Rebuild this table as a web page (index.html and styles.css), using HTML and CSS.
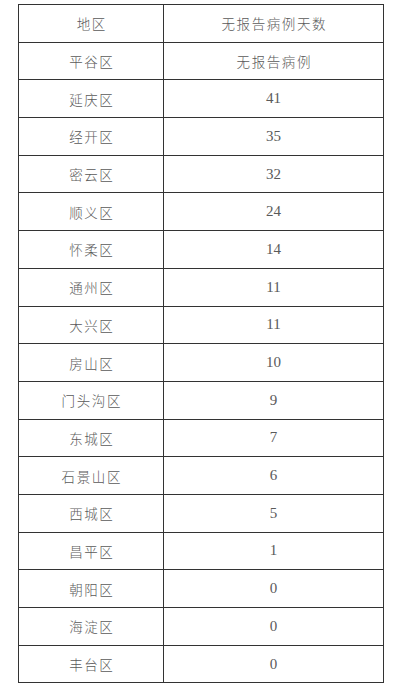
FILE: index.html
```html
<!DOCTYPE html>
<html lang="zh-CN">
<head>
<meta charset="utf-8">
<title>无报告病例天数</title>
<link rel="stylesheet" href="styles.css">
</head>
<body>
<table class="stats">
  <tr><td class="name">地区</td><td class="name">无报告病例天数</td></tr>
  <tr><td class="name">平谷区</td><td class="name">无报告病例</td></tr>
  <tr><td class="name">延庆区</td><td class="num">41</td></tr>
  <tr><td class="name">经开区</td><td class="num">35</td></tr>
  <tr><td class="name">密云区</td><td class="num">32</td></tr>
  <tr><td class="name">顺义区</td><td class="num">24</td></tr>
  <tr><td class="name">怀柔区</td><td class="num">14</td></tr>
  <tr><td class="name">通州区</td><td class="num">11</td></tr>
  <tr><td class="name">大兴区</td><td class="num">11</td></tr>
  <tr><td class="name">房山区</td><td class="num">10</td></tr>
  <tr><td class="name">门头沟区</td><td class="num">9</td></tr>
  <tr><td class="name">东城区</td><td class="num">7</td></tr>
  <tr><td class="name">石景山区</td><td class="num">6</td></tr>
  <tr><td class="name">西城区</td><td class="num">5</td></tr>
  <tr><td class="name">昌平区</td><td class="num">1</td></tr>
  <tr><td class="name">朝阳区</td><td class="num">0</td></tr>
  <tr><td class="name">海淀区</td><td class="num">0</td></tr>
  <tr><td class="name">丰台区</td><td class="num">0</td></tr>
</table>
</body>
</html>
```

FILE: styles.css
```css
html, body {
  margin: 0;
  padding: 0;
  background: #ffffff;
}

body {
  padding: 4px 0 0 18px;
}

.stats {
  border-collapse: collapse;
  width: 366px;
  table-layout: fixed;
}

.stats td {
  border: 1.6px solid #333333;
  height: 36.7px;
  padding: 0;
  text-align: center;
  vertical-align: middle;
  color: #5a5a5a;
}

.stats td:first-child {
  width: 144px;
}

.name {
  font-family: "Noto Sans CJK SC", "Liberation Serif", serif;
  font-size: 13.5px;
  font-weight: 300;
  letter-spacing: 1.6px;
  text-indent: 1.6px;
}

.num {
  font-family: "Liberation Serif", "Noto Sans CJK SC", serif;
  font-size: 15px;
}
```
